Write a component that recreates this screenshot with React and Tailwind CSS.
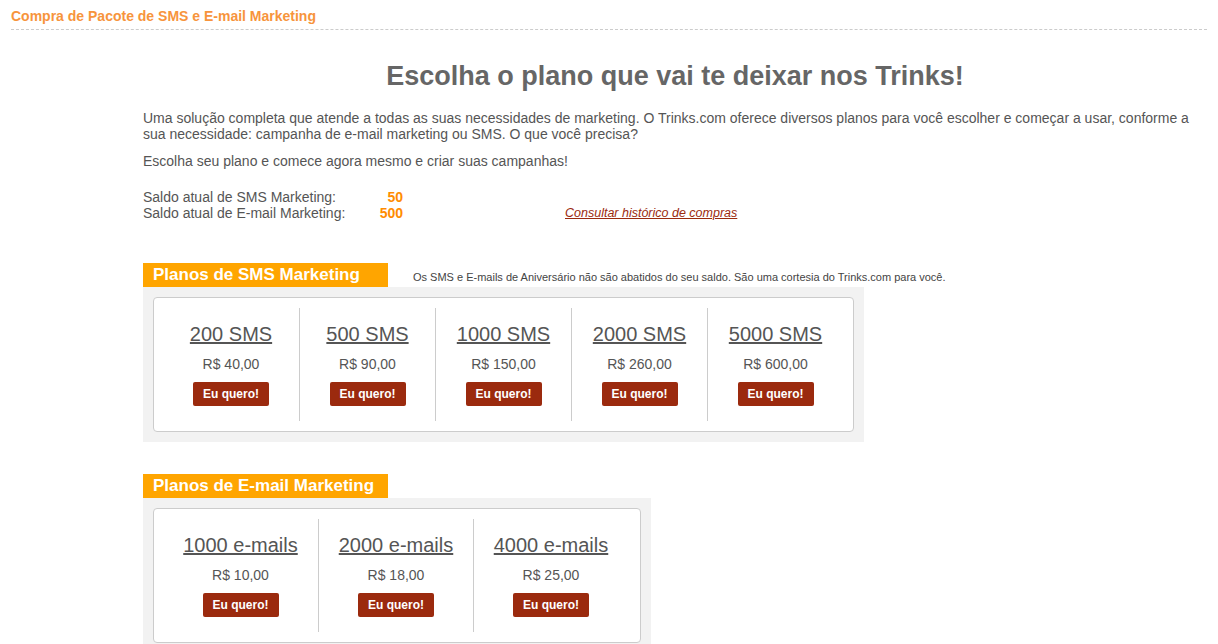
const smsPlans = [
  { name: '200 SMS', price: 'R$ 40,00' },
  { name: '500 SMS', price: 'R$ 90,00' },
  { name: '1000 SMS', price: 'R$ 150,00' },
  { name: '2000 SMS', price: 'R$ 260,00' },
  { name: '5000 SMS', price: 'R$ 600,00' },
]

const emailPlans = [
  { name: '1000 e-mails', price: 'R$ 10,00' },
  { name: '2000 e-mails', price: 'R$ 18,00' },
  { name: '4000 e-mails', price: 'R$ 25,00' },
]

function PlanCard({ plans, colWidth, padRight }) {
  return (
    <div className="bg-[#f2f2f2] p-[10px]">
      <div className={`bg-white border border-[#cccccc] rounded-[4px] py-[10px] pl-[9px] flex ${padRight}`}>
        {plans.map((p, i) => (
          <div
            key={p.name}
            className={`flex flex-col items-center pt-[14px] pb-[15px] ${colWidth} ${i > 0 ? 'border-l border-[#cccccc]' : ''}`}
          >
            <a href="#" className="text-[20px] leading-[24px] text-[#555555] underline">{p.name}</a>
            <div className="text-[14px] leading-[16px] text-[#555555] mt-[10px]">{p.price}</div>
            <button className="mt-[10px] h-[24px] px-[10px] bg-[#9b2a0e] text-white text-[12px] font-bold rounded-[2px]">
              Eu quero!
            </button>
          </div>
        ))}
      </div>
    </div>
  )
}

export default function App() {
  return (
    <div className="min-h-[644px] bg-white px-[11px] font-['Liberation_Sans',Arial,sans-serif] text-[#555555]">
      <div className="pt-[8px] pb-[5px] border-b border-dashed border-[#cccccc]">
        <h2 className="text-[14px] leading-[16px] font-bold text-[#f7943c]">Compra de Pacote de SMS e E-mail Marketing</h2>
      </div>

      <div className="ml-[132px]">
        <h1 className="text-center text-[27px] leading-[30px] font-bold text-[#666666] mt-[31px]">
          Escolha o plano que vai te deixar nos Trinks!
        </h1>

        <p className="text-[14px] leading-[16px] mt-[19px]">
          Uma solução completa que atende a todas as suas necessidades de marketing. O Trinks.com oferece diversos planos para você escolher e começar a usar, conforme a sua necessidade: campanha de e-mail marketing ou SMS. O que você precisa?
        </p>
        <p className="text-[14px] leading-[16px] mt-[11px]">Escolha seu plano e comece agora mesmo e criar suas campanhas!</p>

        <div className="mt-[20px] flex items-end text-[14px] leading-[16px]">
          <div className="w-[260px]">
            <div className="flex justify-between">
              <span>Saldo atual de SMS Marketing:</span>
              <span className="font-bold text-[#ff8c00]">50</span>
            </div>
            <div className="flex justify-between">
              <span>Saldo atual de E-mail Marketing:</span>
              <span className="font-bold text-[#ff8c00]">500</span>
            </div>
          </div>
          <a href="#" className="ml-[162px] text-[12.5px] italic underline text-[#9b2a0e]">Consultar histórico de compras</a>
        </div>

        <div className="mt-[42px]">
          <div className="flex items-end">
            <div className="w-[245px] h-[24px] bg-[#ffa500] text-white font-bold text-[17px] leading-[24px] pl-[10px]">Planos de SMS Marketing</div>
            <div className="ml-[25px] text-[11px] leading-[13px] pb-[3px] text-[#444444]">
              Os SMS e E-mails de Aniversário não são abatidos do seu saldo. São uma cortesia do Trinks.com para você.
            </div>
          </div>
          <div className="inline-block">
            <PlanCard plans={smsPlans} colWidth="w-[136px]" padRight="pr-[10px]" />
          </div>
        </div>

        <div className="mt-[32px]">
          <div className="w-[245px] h-[24px] bg-[#ffa500] text-white font-bold text-[17px] leading-[24px] pl-[10px]">Planos de E-mail Marketing</div>
          <div className="inline-block">
            <PlanCard plans={emailPlans} colWidth="w-[155px]" padRight="pr-[12px]" />
          </div>
        </div>
      </div>
    </div>
  )
}
